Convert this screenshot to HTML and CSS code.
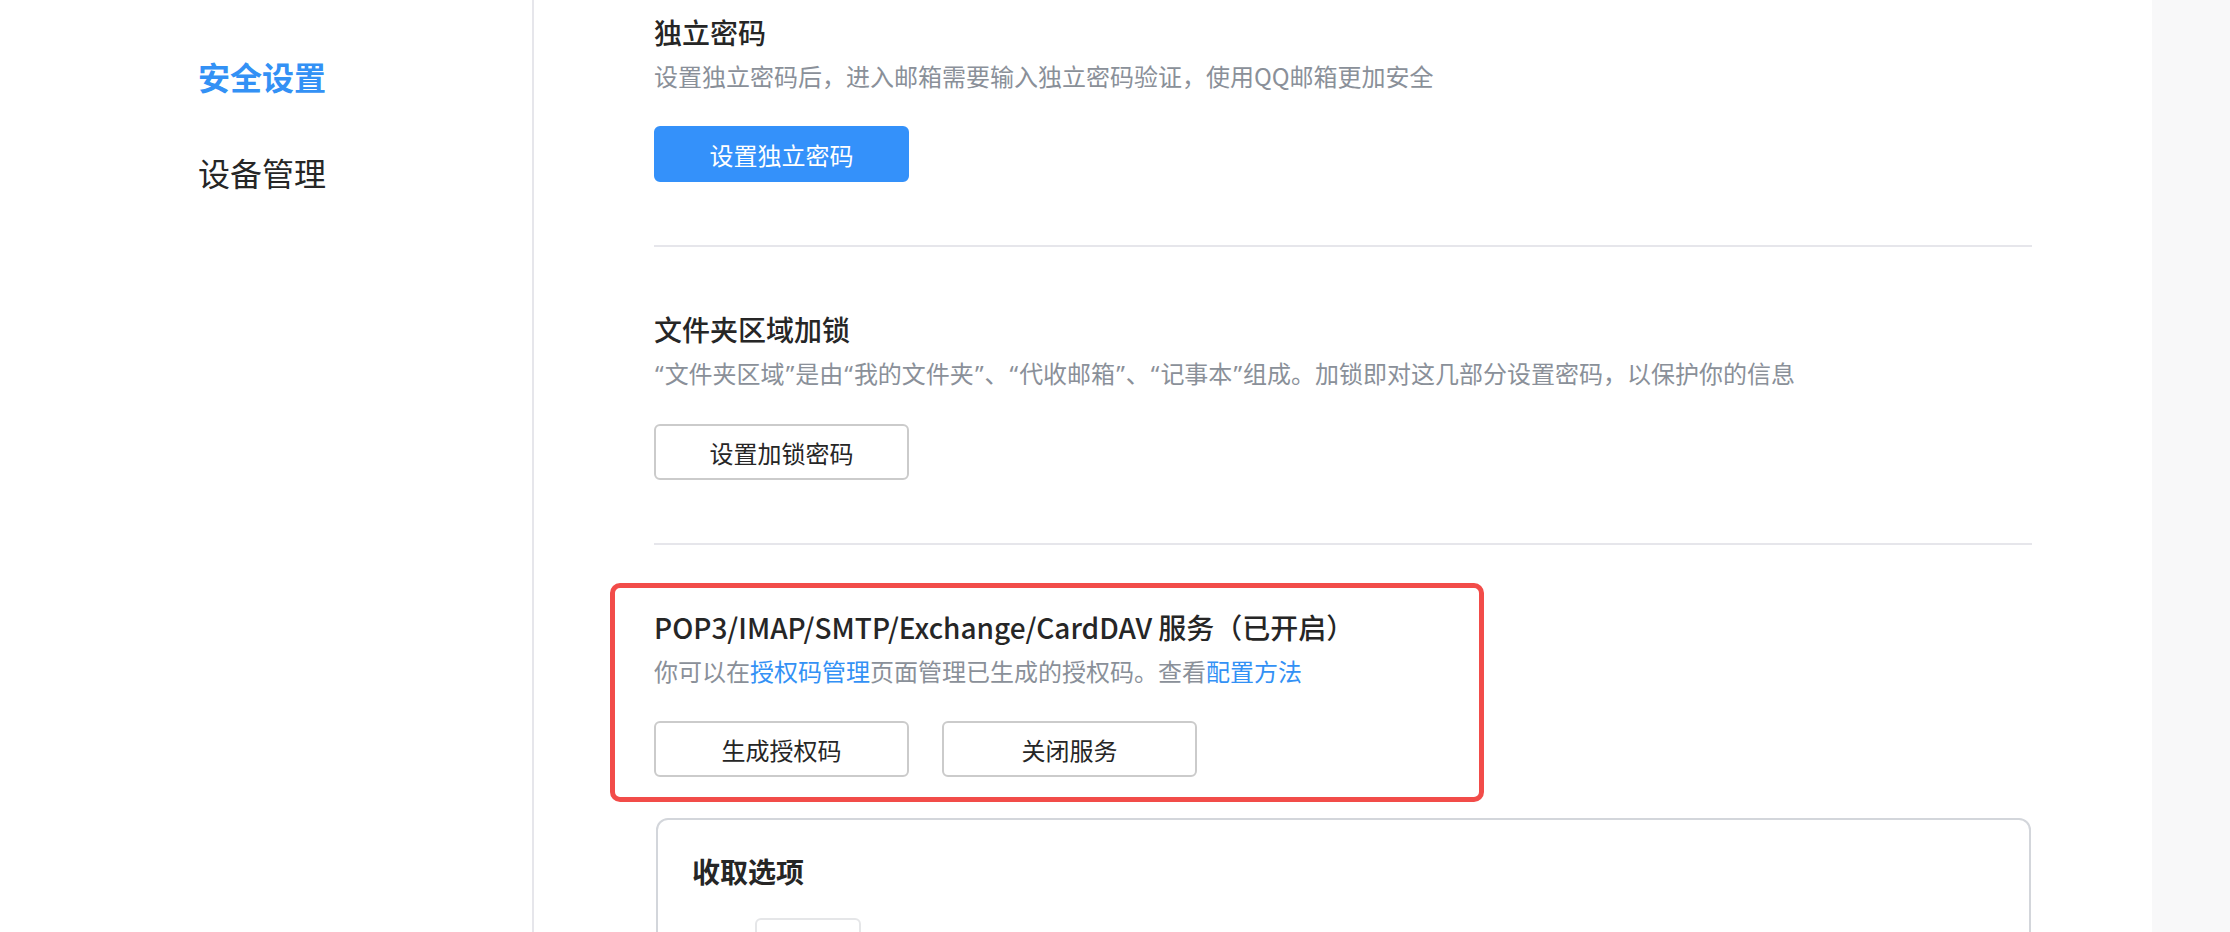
FILE: index.html
```html
<!DOCTYPE html>
<html lang="zh-CN">
<head>
<meta charset="utf-8">
<title>安全设置</title>
<link rel="stylesheet" href="styles.css">
</head>
<body>
<div class="page">
  <aside class="sidebar">
    <nav class="nav">
      <div class="nav-item active">安全设置</div>
      <div class="nav-item">设备管理</div>
    </nav>
  </aside>
  <main class="main">
    <section class="section">
      <h2 class="sec-title">独立密码</h2>
      <p class="sec-desc">设置独立密码后，进入邮箱需要输入独立密码验证，使用QQ邮箱更加安全</p>
      <div class="btn-row">
        <button class="btn btn-primary">设置独立密码</button>
      </div>
    </section>
    <section class="section">
      <h2 class="sec-title">文件夹区域加锁</h2>
      <p class="sec-desc"><span class="q">“</span>文件夹区域<span class="q">”</span>是由<span class="q">“</span>我的文件夹<span class="q">”</span>、<span class="q">“</span>代收邮箱<span class="q">”</span>、<span class="q">“</span>记事本<span class="q">”</span>组成。加锁即对这几部分设置密码，以保护你的信息</p>
      <div class="btn-row">
        <button class="btn">设置加锁密码</button>
      </div>
    </section>
    <section class="section section-last">
      <div class="highlight"></div>
      <h2 class="sec-title">POP3/IMAP/SMTP/Exchange/CardDAV 服务（已开启）</h2>
      <p class="sec-desc">你可以在<a class="link">授权码管理</a>页面管理已生成的授权码。查看<a class="link">配置方法</a></p>
      <div class="btn-row">
        <button class="btn">生成授权码</button>
        <button class="btn">关闭服务</button>
      </div>
    </section>
    <div class="card">
      <h3 class="card-title">收取选项</h3>
      <div class="card-row">
        <div class="mini-box"></div>
      </div>
    </div>
  </main>
  <div class="strip"></div>
</div>
</body>
</html>
```

FILE: styles.css
```css
html, body {
  margin: 0;
  padding: 0;
  height: 100%;
  overflow: hidden;
  background: #ffffff;
}

body {
  font-family: "Noto Sans CJK SC", "Noto Sans", sans-serif;
  color: #262626;
}

.page {
  display: flex;
  min-height: 100vh;
}

.sidebar {
  width: 532px;
  flex: none;
  border-right: 2px solid #e6e6eb;
}

.nav {
  padding-top: 52px;
  padding-left: 198px;
  display: flex;
  flex-direction: column;
  gap: 48px;
}

.nav-item {
  font-size: 32px;
  line-height: 48px;
  height: 48px;
  color: #262626;
  font-weight: 400;
}

.nav-item.active {
  color: #3391f5;
  font-weight: 700;
}

.main {
  flex: 1;
  padding: 0 120px;
  min-width: 0;
}

.section {
  position: relative;
  padding-top: 62px;
  padding-bottom: 63px;
  border-bottom: 2px solid #e6e6eb;
}

.section:first-child {
  padding-top: 12px;
}

.section-last {
  border-bottom: none;
  padding-bottom: 41px;
}

.sec-title {
  margin: 0;
  font-size: 28px;
  line-height: 40px;
  font-weight: 500;
  color: #262626;
}

.sec-desc {
  margin: 6px 0 0;
  font-size: 24px;
  line-height: 36px;
  color: #8a9099;
}

.q {
  font-family: "Noto Sans", sans-serif;
  margin: 0 1px;
}

.link {
  color: #3391f5;
  text-decoration: none;
}

.btn-row {
  display: flex;
  gap: 33px;
  margin-top: 32px;
}

.btn {
  width: 255px;
  height: 56px;
  box-sizing: border-box;
  border: 2px solid #cbcbcb;
  border-radius: 6px;
  background: #ffffff;
  font-family: "Noto Sans CJK SC", "Noto Sans", sans-serif;
  font-size: 24px;
  color: #262626;
  padding: 0;
}

.btn-primary {
  background: #3491fa;
  border-color: #3491fa;
  color: #ffffff;
}

.highlight {
  position: absolute;
  left: -44px;
  top: 38px;
  width: 874px;
  height: 219px;
  box-sizing: border-box;
  border: 5px solid #f24c49;
  border-radius: 10px;
  pointer-events: none;
}

.card {
  margin-left: 2px;
  margin-right: 1px;
  border: 2px solid #d3d6db;
  border-radius: 12px;
  padding: 31px 34px 0;
  height: 400px;
}

.card-title {
  margin: 0;
  font-size: 28px;
  line-height: 40px;
  font-weight: 600;
  color: #262626;
}

.card-row {
  margin-top: 27px;
  padding-left: 63px;
}

.mini-box {
  width: 106px;
  height: 60px;
  box-sizing: border-box;
  border: 2px solid #e5e6e8;
  border-radius: 6px;
}

.strip {
  width: 78px;
  flex: none;
  background: #f8f8f9;
}
```
